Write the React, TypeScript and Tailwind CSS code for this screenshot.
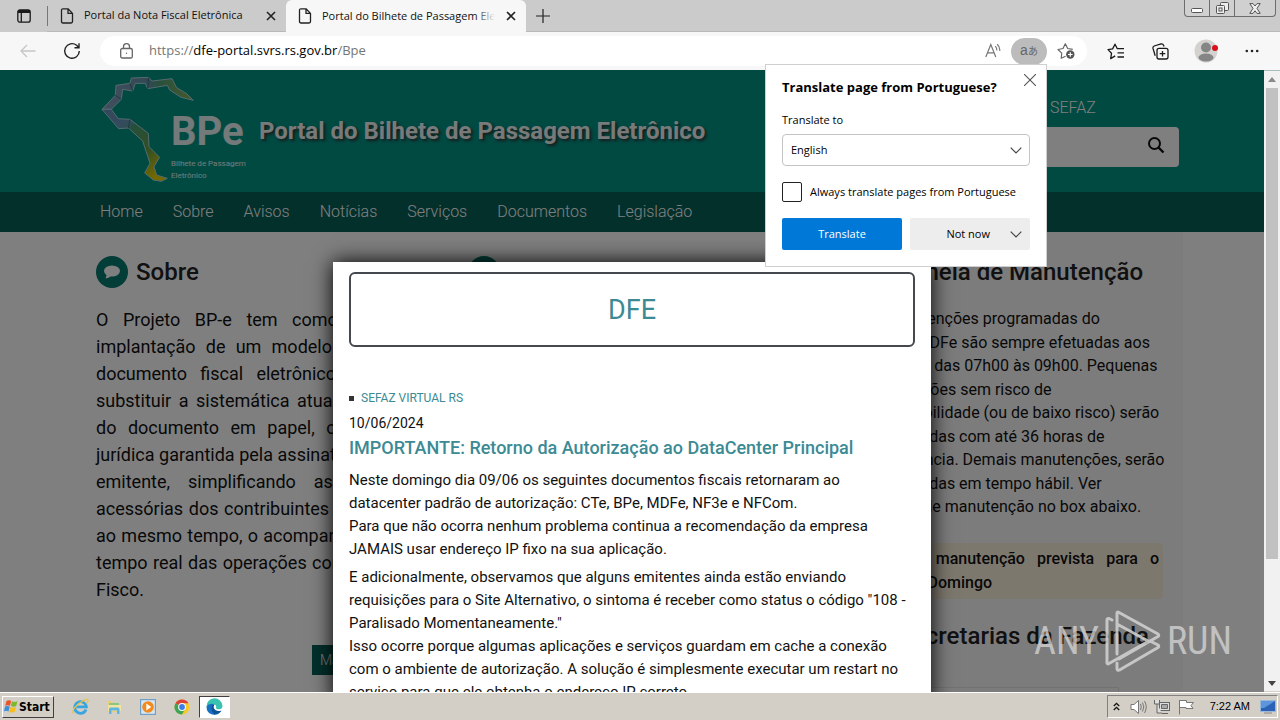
import React from "react";

const UI = "font-['Open_Sans','Noto_Sans_CJK_JP',sans-serif]";

const PageIcon = () => (
  <svg width="14" height="16" viewBox="0 0 14 16" fill="none" stroke="#222" strokeWidth="1.3" strokeLinejoin="round" className="shrink-0">
    <path d="M1.5 2.2Q1.5 .8 2.9 .8H8l4.5 4.6V13.6Q12.5 15 11.1 15H2.9Q1.5 15 1.5 13.6ZM8 .8V5.4h4.5" />
  </svg>
);

const CloseX = () => (
  <svg width="10" height="10" viewBox="0 0 10 10" stroke="#222" strokeWidth="1.6">
    <path d="M1 1l8 8M9 1L1 9" />
  </svg>
);

function TabStrip() {
  return (
    <div role="tablist" className="flex h-8 shrink-0 bg-[#cbcbcb]">
      <button aria-label="Tab actions" className="flex w-[47px] items-center justify-center">
        <svg width="14" height="14" viewBox="0 0 14 14" fill="none" stroke="#1a1a1a" strokeWidth="1.3">
          <rect x=".8" y=".8" width="12.4" height="12.4" rx="2.2" />
          <path d="M1 2.5H13" strokeWidth="3" />
          <path d="M4.3 3V13" />
        </svg>
      </button>
      <div className="flex w-[239px] items-center border-b border-[#b9b9b9] pr-[5px]">
        <span className="h-5 w-px bg-[#777]" />
        <button role="tab" aria-selected="false" className="flex flex-1 items-center gap-[10px] pl-3 text-left text-[11px] text-[#111]">
          <PageIcon />
          <span className="whitespace-nowrap">Portal da Nota Fiscal Eletrônica</span>
        </button>
        <button aria-label="Close tab" className="p-[5px]"><CloseX /></button>
      </div>
      <div className="flex w-[240px] items-center rounded-t-md bg-[#f7f7f7] pr-[5px]">
        <button role="tab" aria-selected="true" className="flex min-w-0 flex-1 items-center gap-[10px] pl-3 text-left text-[11px] text-[#111]">
          <PageIcon />
          <span className="relative mr-[6px] overflow-hidden whitespace-nowrap">
            Portal do Bilhete de Passagem Eletrônico
            <span className="absolute inset-y-0 right-0 w-5 bg-gradient-to-r from-transparent to-[#f7f7f7]" />
          </span>
        </button>
        <button aria-label="Close tab" className="p-[5px]"><CloseX /></button>
      </div>
      <div className="flex flex-1 items-start justify-between border-b border-[#b9b9b9]">
        <button aria-label="New tab" className="flex h-8 w-[34px] items-center justify-center">
          <svg width="14" height="14" viewBox="0 0 14 14" stroke="#222" strokeWidth="1.2"><path d="M7 0V14M0 7H14" /></svg>
        </button>
        <div className="mr-1 flex h-[17px] rounded-b-[4px] border border-t-0 border-[#6d6d6d] bg-[#d0d0d0]">
          <button aria-label="Minimize" className="flex w-[25px] items-center justify-center border-r border-[#6d6d6d] pt-1">
            <svg width="12" height="5" viewBox="0 0 12 5"><rect x=".5" y=".5" width="11" height="4" rx="1" fill="#fff" stroke="#555" /></svg>
          </button>
          <button aria-label="Restore" className="flex w-[25px] items-center justify-center border-r border-[#6d6d6d]">
            <svg width="13" height="12" viewBox="0 0 13 12" fill="#eee" stroke="#555">
              <rect x="4.5" y=".5" width="8" height="8" rx="1" />
              <rect x=".5" y="3.500" width="8" height="8" rx="1" />
              <rect x="3" y="6" width="3" height="3" />
            </svg>
          </button>
          <button aria-label="Close" className="flex w-[40px] items-center justify-center">
            <svg width="12" height="11" viewBox="0 0 12 11"><path d="M.8 .6H4L6 3 8 .6h3.200L8 5.400 11.200 10.400H8L6 7.800 4 10.400H.8L4 5.400Z" fill="#eee" stroke="#555" /></svg>
          </button>
        </div>
      </div>
    </div>
  );
}

function Toolbar() {
  return (
    <div className="flex h-[38px] shrink-0 items-center bg-[#f7f7f7]">
      <button aria-label="Back" className="flex w-[56px] justify-center">
        <svg width="16" height="14" viewBox="0 0 16 14" fill="none" stroke="#c6c6c6" strokeWidth="1.3"><path d="M15.500 7H1M7 1L1 7l6 6" /></svg>
      </button>
      <button aria-label="Refresh" className="flex w-[32px] justify-center">
        <svg width="18" height="18" viewBox="0 0 18 18" fill="none" stroke="#222" strokeWidth="1.400"><path d="M16.300 9A7.300 7.300 0 1 1 13.600 3.300L15.800 5.500M16 1.200V5.700H11.500" /></svg>
      </button>
      <div className="ml-3 flex h-[30px] flex-1 items-center rounded-full bg-white">
        <span className="flex w-[49px] justify-center pl-[3px]">
          <svg width="13" height="16" viewBox="0 0 13 16" fill="none" stroke="#666" strokeWidth="1.300">
            <rect x=".7" y="5.500" width="11.600" height="9.500" rx="1.600" />
            <path d="M3.500 5.500V3.700a3 3 0 0 1 6 0V5.500" />
            <circle cx="6.500" cy="10.300" r=".7" fill="#666" stroke="none" />
          </svg>
        </span>
        <div className="flex-1 text-[13px] text-[#767676]">
          https://<span className="text-black">dfe-portal.svrs.rs.gov.br</span>/Bpe
        </div>
        <button aria-label="Read aloud" className="flex w-[36px] justify-center">
          <svg width="16" height="16" viewBox="0 0 16 16" fill="none" stroke="#777" strokeWidth="1.200">
            <path d="M.8 14L5.800 1.500 10.800 14M2.500 9.800H9.200M10.300 3.200Q12 5 11.800 7.400M12.200 1.300Q15.200 4 14.700 7.800" />
          </svg>
        </button>
        <button aria-label="Translate" className="h-[27px] w-9 rounded-full bg-[#bcbcbc] font-['Liberation_Sans','Noto_Sans_CJK_JP',sans-serif] text-xs leading-[27px] text-[#666]">
          <span className="text-sm">a</span><span className="text-[10px]">あ</span>
        </button>
        <button aria-label="Add to favorites" className="flex w-10 justify-center pr-[2px]">
          <svg width="19" height="18" viewBox="0 0 19 18" fill="none" stroke="#666" strokeWidth="1.200" strokeLinejoin="round">
            <path d="M8.500 14.200L4.200 16.200 4.700 11.200 1 7.500 6 6.500 8.300 1.800 10.700 6.500 15.800 7.300" />
            <circle cx="13.300" cy="12.500" r="4.200" fill="#555" stroke="none" />
            <path d="M13.300 10.200V14.800M11 12.500H15.600" stroke="#fff" />
          </svg>
        </button>
      </div>
      <div className="flex w-[193px] shrink-0 items-center pl-[7px]">
        <button aria-label="Favorites" className="flex w-11 justify-center">
          <svg width="18" height="17" viewBox="0 0 18 17" fill="none" stroke="#1a1a1a" strokeWidth="1.300" strokeLinejoin="round">
            <path d="M8.200 12.900L3.700 15.600 4.500 10.300 1 6.600 5.600 5.900 8 1.200 10.300 5.700H17M10.500 9.800H17M10.500 14H17" />
          </svg>
        </button>
        <button aria-label="Collections" className="flex w-11 justify-center">
          <svg width="17" height="17" viewBox="0 0 17 17" fill="none" stroke="#1a1a1a" strokeWidth="1.300">
            <rect x="5" y="5.400" width="11" height="10.600" rx="2" />
            <path d="M10.500 7.900V13.500M7.700 10.700H13.300M3.200 12.800L1 5.400Q.6 3.700 2.200 3L9 1Q10.900 .6 11.700 2.500L12 3.500" />
          </svg>
        </button>
        <button aria-label="Profile" className="flex w-[48px] justify-center">
          <svg width="24" height="24" viewBox="0 0 24 24">
            <circle cx="12" cy="12" r="11.500" fill="#d4d2cf" />
            <circle cx="12" cy="8.500" r="5" fill="#858585" />
            <ellipse cx="12" cy="18.500" rx="7.500" ry="4" fill="#858585" />
            <circle cx="21" cy="9" r="3" fill="#d8101c" />
          </svg>
        </button>
        <button aria-label="Settings and more" className="flex w-[43px] justify-center">
          <svg width="14" height="4" viewBox="0 0 14 4" fill="#222"><circle cx="1.800" cy="2" r="1.300" /><circle cx="7" cy="2" r="1.300" /><circle cx="12.200" cy="2" r="1.300" /></svg>
        </button>
      </div>
    </div>
  );
}

const Chevron = () => (
  <svg width="12" height="7" viewBox="0 0 12 7" fill="none" stroke="#444" strokeWidth="1.200"><path d="M.7 .7L6 6 11.300 .7" /></svg>
);

function TranslatePopup() {
  return (
    <div role="dialog" aria-label="Translate page" className="absolute right-[233px] top-[64px] z-20 w-[282px] border border-[#cfcfcf] bg-white px-4 pb-4 pt-3 text-[11px] text-black">
      <button aria-label="Close" className="absolute right-[10px] top-[9px]">
        <svg width="12" height="12" viewBox="0 0 12 12" stroke="#555" strokeWidth="1.100"><path d="M0 0L12 12M12 0L0 12" /></svg>
      </button>
      <h2 className="whitespace-nowrap text-[13px] font-bold leading-5">Translate page from Portuguese?</h2>
      <label htmlFor="lang" className="mt-[13px] block leading-5">Translate to</label>
      <div className="relative mt-1 flex items-center">
        <select id="lang" className="h-8 w-full appearance-none rounded-sm border border-[#c4c4c4] bg-white px-2">
          <option>English</option>
        </select>
        <span className="pointer-events-none absolute right-2"><Chevron /></span>
      </div>
      <label className="mt-4 flex items-center gap-2">
        <input type="checkbox" className="h-5 w-5 appearance-none rounded-xs border border-[#222] bg-white" />
        <span className="whitespace-nowrap">Always translate pages from Portuguese</span>
      </label>
      <div className="mt-4 grid grid-cols-2 gap-2">
        <button className="h-8 rounded-xs bg-[#0078d7] text-white">Translate</button>
        <button className="flex h-8 items-center justify-end gap-5 rounded-xs bg-[#ededed] pr-2">Not now <Chevron /></button>
      </div>
    </div>
  );
}

function BrazilMap() {
  return (
    <svg width="95" height="108" viewBox="60 27 285 324" className="shrink-0" stroke="#a9d6df" strokeWidth="3" strokeLinejoin="round">
      <defs>
        <linearGradient id="north" x1="0" y1="0" x2="1" y2="0">
          <stop offset="0" stopColor="#85a0c0" /><stop offset=".5" stopColor="#668faa" /><stop offset=".62" stopColor="#52a07b" /><stop offset="1" stopColor="#8cb458" />
        </linearGradient>
        <linearGradient id="south" x1="0" y1="0" x2=".7" y2="1">
          <stop offset="0" stopColor="#698fb8" /><stop offset=".32" stopColor="#6799b8" /><stop offset=".38" stopColor="#4a9e7a" /><stop offset=".72" stopColor="#68a044" /><stop offset="1" stopColor="#e8d000" />
        </linearGradient>
      </defs>
      <path fill="url(#north)" d="M66 130L106 88 108 58 150 52 154 36 206 34 216 45 276 38 290 65 320 83 340 103 303 94 269 72 262 58 203 68 196 52 166 52 158 75 128 70 124 100 94 130Z" />
      <path fill="url(#south)" d="M66 130L94 130 115 158 150 160 205 202 207 242 239 274 222 302 230 327 262 337 244 346 220 342 194 321 210 292 188 225 145 186 116 188Z" />
      <path fill="none" stroke="#3d7480" d="M106 88L124 100M150 52L158 75M206 34L203 68M145 186L150 160" />
    </svg>
  );
}

function SiteHeader() {
  const links = ["Home", "Sobre", "Avisos", "Notícias", "Serviços", "Documentos", "Legislação"];
  return (
    <header>
      <div className="flex h-[122px] items-start justify-between bg-[#009485] pl-[100px] pr-[85px]">
        <div className="flex">
          <div className="relative w-[159px] pt-[5px]">
            <BrazilMap />
            <div className="absolute left-[71px] top-[36px] whitespace-nowrap text-white/90">
              <div className="text-[40px] font-bold leading-[52px]">BPe</div>
              <div className="text-[8px] leading-[12px]">Bilhete de Passagem<br />Eletrônico</div>
            </div>
          </div>
          <h1 className="pt-[45px] text-2xl font-bold leading-8 text-white/95 [text-shadow:2px_2px_3px_#333]">Portal do Bilhete de Passagem Eletrônico</h1>
        </div>
        <div className="w-[280px] pt-[26px]">
          <a href="#sefaz" className="ml-[151px] block font-light leading-6 text-white">SEFAZ</a>
          <form className="mt-[7px] flex h-10 items-center rounded bg-white pr-[14px]" onSubmit={(e) => e.preventDefault()}>
            <input aria-label="Pesquisar" className="h-full min-w-0 flex-1 bg-transparent px-3 outline-none" />
            <button aria-label="Buscar" className="pb-1">
              <svg width="18" height="18" viewBox="0 0 18 18" fill="none" stroke="#111" strokeWidth="2"><circle cx="7.500" cy="7.500" r="5.500" /><path d="M11.500 11.500L16.500 16.500" strokeWidth="2.400" /></svg>
            </button>
          </form>
        </div>
      </div>
      <nav className="flex h-10 items-center gap-[30px] bg-[#066057] pl-[100px] font-light text-white">
        {links.map((l) => <a key={l} href="#nav">{l}</a>)}
      </nav>
    </header>
  );
}

const Badge = () => (
  <span className="flex h-8 w-8 shrink-0 items-center justify-center rounded-full bg-[#067a70]">
    <svg width="16" height="14" viewBox="0 0 16 14" fill="#fff"><ellipse cx="8" cy="6" rx="8" ry="5.500" /><path d="M3 9L1.500 13.500Q5 13 7 11Z" /></svg>
  </span>
);

const schedule = [
  "As manutenções programadas do",
  "ambiente DFe são sempre efetuadas aos",
  "domingos das 07h00 às 09h00. Pequenas",
  "manutenções sem risco de",
  "indisponibilidade (ou de baixo risco) serão",
  "comunicadas com até 36 horas de",
  "antecedência. Demais manutenções, serão",
  "comunicadas em tempo hábil. Ver",
  "previsão de manutenção no box abaixo.",
];

function SiteBody() {
  return (
    <main className="flex flex-1 bg-white pl-24 text-[#111]">
      <section className="w-[344px] shrink-0 pt-6">
        <h2 className="flex items-center gap-2 text-2xl font-medium leading-8 text-[#222]"><Badge />Sobre</h2>
        <p className="pt-[18px] text-justify text-lg leading-[27px]">
          O Projeto BP-e tem como objetivo a implantação de um modelo nacional de documento fiscal eletrônico que venha
          substituir a sistemática atual de emissão do documento em papel, com validade jurídica garantida pela assinatura digital do
          emitente, simplificando as obrigações acessórias dos contribuintes e permitindo, ao mesmo tempo, o acompanhamento em
          tempo real das operações comerciais pelo Fisco.
        </p>
        <a href="#mais" className="ml-auto mt-[42px] block w-32 bg-[#066057] px-2 text-sm font-light leading-[30px] text-white">Mais informações</a>
      </section>
      <section className="flex-1 pl-7 pt-6">
        <h2><Badge /></h2>
      </section>
      <aside className="mr-[81px] w-[350px] shrink-0 bg-[#f8f8f8] pl-[10px] pr-5 pt-6">
        <h2 className="pr-5 text-right text-2xl font-medium leading-8 text-[#222]">Janela de Manutenção</h2>
        <div className="ml-4 mt-[21px] flex h-[208px] flex-col justify-between whitespace-nowrap leading-5">
          {schedule.map((l) => <span key={l}>{l}</span>)}
        </div>
        <p className="mt-[26px] rounded bg-[#faf0dc] py-1 pl-[22px] pr-1 text-justify font-medium leading-6">
          Não há manutenção prevista para o próximo Domingo
        </p>
        <h2 className="pr-[14px] pt-[21px] text-right text-2xl font-medium leading-8 text-[#222]">Secretarias da Fazenda</h2>
        <div className="mr-[44px] mt-[35px] h-10 border border-[#e4e4e4]" />
      </aside>
    </main>
  );
}

function Modal() {
  return (
    <div role="dialog" aria-label="DFE" className="absolute left-1/2 top-[192px] w-[598px] -translate-x-1/2 bg-white px-4 pt-[10px] text-[15px] leading-[23px] text-[#111] shadow-[0_0_20px_#000]">
      <h2 className="rounded-md border-2 border-[#45494d] pt-px text-center text-[27px] leading-[70px] text-[#3b8a94]">DFE</h2>
      <div className="mt-[41px] flex items-center gap-[7px] text-xs leading-5 text-[#3b8a94]">
        <span className="h-[5px] w-[5px] bg-[#333]" />
        <a href="#svrs">SEFAZ VIRTUAL RS</a>
      </div>
      <div className="mt-[3px] text-sm leading-6">10/06/2024</div>
      <h3 className="mt-px text-lg font-medium leading-6 text-[#3b8a94]">IMPORTANTE: Retorno da Autorização ao DataCenter Principal</h3>
      <p className="mt-[9px] whitespace-nowrap">
        Neste domingo dia 09/06 os seguintes documentos fiscais retornaram ao<br />
        datacenter padrão de autorização: CTe, BPe, MDFe, NF3e e NFCom.<br />
        Para que não ocorra nenhum problema continua a recomendação da empresa<br />
        JAMAIS usar endereço IP fixo na sua aplicação.
      </p>
      <p className="mt-[5px] whitespace-nowrap">
        E adicionalmente, observamos que alguns emitentes ainda estão enviando<br />
        requisições para o Site Alternativo, o sintoma é receber como status o código "108 -<br />
        Paralisado Momentaneamente."<br />
        Isso ocorre porque algumas aplicações e serviços guardam em cache a conexão<br />
        com o ambiente de autorização. A solução é simplesmente executar um restart no<br />
        serviço para que ele obtenha o endereço IP correto.
      </p>
    </div>
  );
}

function Scrollbar() {
  return (
    <div aria-hidden="true" className="flex w-4 shrink-0 flex-col items-center bg-[#f1f1f1] py-[6px]">
      <svg width="8" height="5" viewBox="0 0 8 5" fill="#888"><path d="M0 5L4 0 8 5Z" /></svg>
      <span className="mt-[6px] h-[471px] w-3 bg-[#c1c1c1]" />
      <svg width="8" height="5" viewBox="0 0 8 5" fill="#444" className="mt-auto"><path d="M0 0L4 5 8 0Z" /></svg>
    </div>
  );
}

function Watermark() {
  return (
    <div className="absolute bottom-[48px] right-[48px] z-10 flex items-center gap-[6px] font-['Roboto_Condensed','Liberation_Sans_Narrow',sans-serif] text-[38px] leading-none text-[#d4d4d4]/80">
      <span>ANY</span>
      <svg width="56" height="62" viewBox="0 0 56 62" fill="none" stroke="#d4d4d4" strokeOpacity=".85" strokeWidth="3" strokeLinejoin="round" strokeLinecap="round">
        <path d="M12 44V3Q12 1.500 14 2.500L53 24Q54.500 25.500 53 26.500L14 49M12 14L43 31M2 50V10Q2 8 4 8.500L7 10M2 50V53Q2.500 54.500 4 53.500L42 32M12 53V59Q12.500 61 14.500 60L53 37.500Q54.500 36 53 35L45 31" />
      </svg>
      <span>RUN</span>
    </div>
  );
}

function Taskbar() {
  return (
    <footer className="flex h-7 shrink-0 items-center border-t border-white bg-[#d4cfc6] pl-[2px] pr-[2px] text-black shadow-[0_-1px_0_#d4cfc6]">
      <button className="flex h-[22px] w-[52px] items-center border border-b-[#404040] border-l-white border-r-[#404040] border-t-white pl-px font-['DejaVu_Sans_Condensed','DejaVu_Sans',sans-serif] text-xs font-bold">
        <svg width="15" height="15" viewBox="0 0 15 15" className="shrink-0">
          <path d="M2.500 2Q5 .5 7.200 2L6 6.800Q3.700 5.500 1.200 6.800Z" fill="#e8552b" />
          <path d="M8 2.300Q10.500 3.700 13.500 2.300L12.200 7Q9.500 8.300 6.900 7Z" fill="#7db82d" />
          <path d="M1 7.500Q3.500 6.300 5.800 7.600L4.500 12.500Q2.500 11 0 12.500Z" fill="#3b8ede" />
          <path d="M6.600 8Q9 9.200 12 8L10.700 12.800Q8 14.200 5.300 12.900Z" fill="#f7bd1a" />
        </svg>
        Start
      </button>
      <div className="ml-[9px] flex h-6 items-center">
        <button aria-label="Internet Explorer" className="flex w-[34px] justify-center">
          <svg width="17" height="17" viewBox="0 0 17 17" fill="none">
            <path d="M14 11.500A5.800 5.800 0 1 1 14.300 8.800H4.500" stroke="#38a5e0" strokeWidth="2.800" />
            <path d="M1.500 15.500Q-1 12 7 5.500 14.500 0 15.700 2 16.500 3 14.800 5.500" stroke="#e9c341" strokeWidth="1.300" />
          </svg>
        </button>
        <button aria-label="Explorer" className="flex w-[34px] justify-center">
          <svg width="16" height="16" viewBox="0 0 16 16">
            <path d="M1 2H6L7 4H14V13H1Z" fill="#e9cf77" /><path d="M3 4H13V8H3Z" fill="#8bc783" /><path d="M2 6H15V12H2Z" fill="#f3e3a0" />
            <path d="M3 15V10Q3 8.500 4.500 8.500H12Q13.500 8.500 13.500 10V15H11V11.500H5.500V15Z" fill="#61b5e3" />
          </svg>
        </button>
        <button aria-label="Media Player" className="flex w-[34px] justify-center">
          <svg width="16" height="16" viewBox="0 0 16 16"><rect x=".6" y=".6" width="14.800" height="14.800" fill="#d8e6f1" stroke="#6fa0c8" strokeWidth="1.200" /><circle cx="8" cy="8" r="5.800" fill="#f28a1c" /><path d="M6.300 4.500L11.300 8 6.300 11.500Z" fill="#fff" /></svg>
        </button>
        <button aria-label="Chrome" className="flex w-[34px] justify-center">
          <svg width="16" height="16" viewBox="0 0 16 16">
            <circle cx="8" cy="8" r="7.500" fill="#f7c928" />
            <path d="M8 8L1.500 4.250A7.500 7.500 0 0 1 14.500 4.250H8Z" fill="#dd4137" />
            <path d="M8 8L1.500 4.250A7.500 7.500 0 0 0 8 15.500L11.200 9.800Z" fill="#3ba457" />
            <circle cx="8" cy="8" r="3.900" fill="#fff" /><circle cx="8" cy="8" r="2.900" fill="#3c7de8" />
          </svg>
        </button>
        <button aria-label="Edge" className="flex h-[22px] w-[31px] items-center justify-center border border-b-white border-l-[#404040] border-r-white border-t-[#404040] bg-white">
          <svg width="17" height="17" viewBox="0 0 16 16">
            <path d="M.5 8A7.500 7.500 0 0 1 15.500 7.500Q15.500 10.500 12 10.700 9 10.700 9.500 9 10 6 7 5.800 4 5.500 .5 8Z" fill="#39c2b0" />
            <path d="M.5 8A7.500 7.500 0 0 0 14.500 12Q9 13.500 7 10 6 7.500 8 6Q3 4 .5 8Z" fill="#176fc4" />
            <path d="M6 6.500Q3.500 11 8 15.500 11.500 15.300 14.300 12 9 13.200 7.300 9.500 6.800 7.500 8 6Z" fill="#0d5192" />
          </svg>
        </button>
      </div>
      <div className="ml-auto flex h-[23px] items-center border border-b-white border-l-[#808080] border-r-white border-t-[#808080] pl-[5px] pr-px font-['Liberation_Sans',sans-serif] text-[11px]">
        <button aria-label="Show hidden icons">
          <svg width="7" height="9" viewBox="0 0 7 9" fill="none" stroke="#111" strokeWidth="1.300"><path d="M.8 4L3.500 1.300 6.200 4M.8 8L3.500 5.300 6.200 8" /></svg>
        </button>
        <svg width="17" height="16" viewBox="0 0 17 16" fill="#fff" stroke="#777" className="ml-[10px]"><path d="M1 5.500H4L8.500 1.500V14.500L4 10.500H1Z" /><path d="M10.500 5Q12 8 10.500 11M12.500 3.500Q15 8 12.500 12.500M14.500 2Q18 8 14.500 14" fill="none" /></svg>
        <svg width="16" height="16" viewBox="0 0 16 16" fill="#ddd" stroke="#666" className="ml-[7px]"><rect x="5.500" y="3.500" width="10" height="8" /><path d="M8 14.500H14M.5 1V5H5.500V1M3 5V14H8" /><path d="M7.500 5.500H13.500V9.500H7.500Z" fill="#aaa" /></svg>
        <svg width="16" height="16" viewBox="0 0 16 16" fill="#fff" stroke="#777" className="ml-[8px]"><path d="M1.500 1V15.500M1.500 1.500H8.500V3.500H15.500L13 6.500 15 9.500H8V8.500H1.500" /></svg>
        <span className="ml-4 whitespace-nowrap">7:22 AM</span>
        <svg width="16" height="14" viewBox="0 0 16 14" className="ml-[10px]"><rect x=".5" y=".5" width="15" height="11" fill="#2b62b5" stroke="#9bb7da" /><path d="M1 1H15L4 8H1Z" fill="#5e96dc" /><path d="M4 13H12" stroke="#888" /></svg>
      </div>
    </footer>
  );
}

export default function App() {
  return (
    <div className={`relative flex h-screen flex-col overflow-hidden ${UI}`}>
      <TabStrip />
      <Toolbar />
      <TranslatePopup />
      <div className="flex min-h-0 flex-1 border-t border-[#a9bebb] font-[Roboto,sans-serif] text-base">
        <div className="relative -mt-px flex min-w-0 flex-1 flex-col overflow-hidden">
          <SiteHeader />
          <SiteBody />
          <div className="absolute inset-0 bg-black/50" />
          <Modal />
        </div>
        <Scrollbar />
        <Watermark />
      </div>
      <Taskbar />
    </div>
  );
}
